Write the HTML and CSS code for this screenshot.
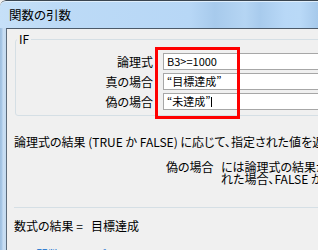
FILE: index.html
```html
<!DOCTYPE html>
<html lang="ja">
<head>
<meta charset="utf-8">
<title>関数の引数</title>
<link rel="stylesheet" href="styles.css">
</head>
<body>
<div class="win">
  <div class="titlebar"><span class="title">関数の引数</span></div>
  <div class="frame">
    <div class="client">
      <div class="group">
        <span class="group-label">IF</span>
        <div class="args">
          <label class="arg-label">論理式</label><div class="field">B3&gt;=1000</div>
          <label class="arg-label">真の場合</label><div class="field">“目標達成”</div>
          <label class="arg-label">偽の場合</label><div class="field">“未達成”<span class="caret"></span></div>
        </div>
      </div>
      <div class="highlight"></div>
      <p class="desc">論理式の結果 (TRUE か FALSE) に応じて、指定された値を返します。</p>
      <div class="arg-help">
        <span class="help-name">偽の場合</span>
        <span class="help-text">には論理式の結果が FALSE であった場合に返される値を指定します。省略さ<br>れた場合、FALSE が返されます。</span>
      </div>
      <hr class="sep">
      <p class="result">数式の結果 =<span class="result-value">目標達成</span></p>
      <a class="help-link">この関数のヘルプ(H)</a>
    </div>
  </div>
</div>
</body>
</html>
```

FILE: styles.css
```css
html, body {
  margin: 0;
  padding: 0;
}
body {
  width: 318px;
  height: 250px;
  overflow: hidden;
  background: #f0f0f0;
  font-family: "Noto Sans CJK JP", "Noto Sans", sans-serif;
  font-feature-settings: "palt";
  color: #000;
}
.win {
  width: 420px;
  height: 250px;
  border-top-left-radius: 6px;
  overflow: hidden;
}
.titlebar {
  height: 27px;
  border-top: 1px solid #3a4550;
  border-top-left-radius: 6px;
  padding-left: 9px;
  display: flex;
  align-items: center;
  box-shadow: inset 0 1px 0 #dfeefb;
  background:
    linear-gradient(90deg, #c6e0f8 0px, #bcdaf6 60px, #b7d7f6 190px, #a7caec 215px, #b5d5f3 245px, #a8cbed 260px, #b8d8f7 285px, #b9d9f7 300px, #a6c9eb 318px, #b0d0f0 420px);
}
.title {
  font-size: 12.5px;
  line-height: 14px;
  color: #000;
}
.frame {
  height: 222px;
  padding-left: 6px;
  background: linear-gradient(90deg, #9ebedd 0, #a9c9e9 2px, #c8ddf2 3px, #c4dbf1 6px);
}
.client {
  position: relative;
  height: 100%;
  box-sizing: border-box;
  border-left: 1px solid #5c6b7b;
  border-top: 1px solid #4c5a69;
  background: #f0f0f0;
  padding-left: 7px;
}
.group {
  position: relative;
  width: 400px;
  margin: 10px 0 0 1px;
  border: 1px solid #d5dfe5;
  border-radius: 3px;
  padding: 13px 0 5px 0;
}
.group-label {
  position: absolute;
  top: -8px;
  left: 1px;
  padding: 0 2px;
  background: #f0f0f0;
  font-size: 12px;
  line-height: 14px;
}
.args {
  display: grid;
  grid-template-columns: 137px 300px;
  grid-auto-rows: 17px;
  column-gap: 10px;
  row-gap: 3px;
}
.arg-label {
  font-size: 12px;
  line-height: 17px;
  text-align: right;
  white-space: nowrap;
}
.field {
  box-sizing: border-box;
  height: 17px;
  border: 1px solid #a7a7a7;
  background: #fff;
  padding-left: 3px;
  font-size: 11px;
  line-height: 15px;
  white-space: nowrap;
}
.caret {
  display: inline-block;
  width: 1px;
  height: 10px;
  margin-left: 1px;
  background: #000;
  vertical-align: -1px;
}
.highlight {
  position: absolute;
  left: 148px;
  top: 18px;
  width: 85px;
  height: 72px;
  box-sizing: border-box;
  border: 3px solid #ff0000;
}
.desc {
  margin: 19px 0 0 0;
  font-size: 12px;
  line-height: 14px;
  white-space: nowrap;
}
.arg-help {
  display: flex;
  margin-top: 12px;
  padding-left: 152px;
  font-size: 12px;
  line-height: 12px;
  white-space: nowrap;
}
.help-name {
  width: 55px;
  flex: none;
}
.sep {
  margin: 22px 0 0 0;
  border: 0;
  height: 1px;
  background: #d5dfe5;
}
.result {
  margin: 11px 0 0 0;
  font-size: 12px;
  line-height: 14px;
  white-space: nowrap;
}
.result-value {
  margin-left: 8px;
}
.help-link {
  display: block;
  margin-top: 15px;
  font-size: 12px;
  line-height: 14px;
  color: #0066cc;
  white-space: nowrap;
}
```
